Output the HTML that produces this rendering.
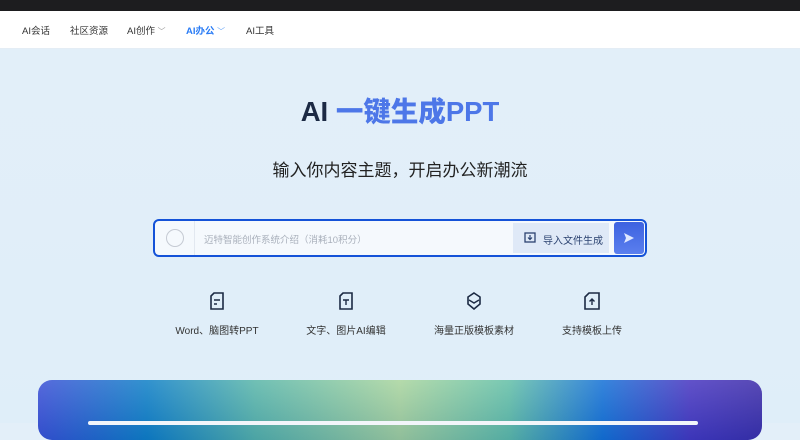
<!DOCTYPE html>
<html><head><meta charset="utf-8"><style>
*{margin:0;padding:0;box-sizing:border-box}
body{width:800px;height:423px;overflow:hidden;font-family:"Liberation Sans","Noto Sans CJK SC",sans-serif;background:linear-gradient(180deg,#e3eff9 0%,#dfeef9 100%);position:relative}
.bm{position:absolute;top:0;left:0;width:800px;height:11px;background:#1d1d1f}
.nav{position:absolute;top:11px;left:0;width:800px;height:38px;background:#fff;border-bottom:1px solid #e4edf5;font-size:9.5px;color:#333}
.nav span{position:absolute;top:12px}
.t{position:absolute;top:89px;left:0;width:800px;text-align:center;font-size:27.5px;font-weight:bold;color:#1c2a44}
.t b{color:#4d77e8}
.s{position:absolute;top:156px;left:0;width:800px;text-align:center;font-size:17px;color:#222}
.box{position:absolute;left:153px;top:219px;width:494px;height:38px;border:2.5px solid #1452d8;border-radius:6px;background:#f5f9fd;overflow:hidden}
.circ{position:absolute;left:11px;top:8px;width:18px;height:18px;border:1.5px solid #c5cad3;border-radius:50%}
.div{position:absolute;left:39px;top:0;width:1px;height:100%;background:#e2e8f0}
.ph{position:absolute;left:49px;top:11px;font-size:9.5px;color:#a9b0bb}
.imp{position:absolute;left:358px;top:2px;width:96px;height:30px;background:#dfe9f7;font-size:10px;color:#2b4270}
.imp span{position:absolute;left:30px;top:9px}
.go{position:absolute;left:459px;top:1px;width:30px;height:32px;background:linear-gradient(180deg,#3d62e0,#5b7fee);border-radius:3px}
.f{position:absolute;top:292px;width:140px;text-align:center;font-size:10px;color:#333}
.f svg{display:block;margin:0 auto 12px}
.card{position:absolute;left:38px;top:380px;width:724px;height:60px;border-radius:14px;background:linear-gradient(90deg,#3a4fd6 0%,#0e7fc6 15%,#58b5a8 30%,#a8d49c 50%,#62bfa6 65%,#1370d6 78%,#4634c0 90%,#3b2aa8 100%)}
.card:after{content:"";position:absolute;left:0;top:0;right:0;bottom:0;border-radius:14px;background:linear-gradient(180deg,rgba(255,255,255,0.15),rgba(0,60,140,0.15))}
.inner{position:absolute;left:88px;top:421px;width:610px;height:4px;background:#f2f5fa;border-radius:3px}
</style></head><body>
<div class="bm"></div>
<div class="nav">
<span style="left:22px">AI会话</span>
<span style="left:70px">社区资源</span>
<span style="left:127px">AI创作 <small style="color:#999">﹀</small></span>
<span style="left:186px;color:#2a7cf5;font-weight:bold">AI办公 <small style="color:#6aa6f5;font-weight:normal">﹀</small></span>
<span style="left:246px">AI工具</span>
</div>
<div class="t">AI <b>一键生成PPT</b></div>
<div class="s">输入你内容主题，开启办公新潮流</div>
<div class="box">
<div class="circ"></div><div class="div"></div>
<div class="ph">迈特智能创作系统介绍（消耗10积分）</div>
<div class="imp"><svg style="position:absolute;left:11px;top:8px" width="12" height="12" viewBox="0 0 12 12"><rect x="1" y="2" width="10" height="9" fill="none" stroke="#2b4270" stroke-width="1.3"/><path d="M6 4v4M4 6.5l2 2 2-2" stroke="#2b4270" stroke-width="1.2" fill="none"/></svg><span>导入文件生成</span></div>
<div class="go"><svg style="position:absolute;left:9px;top:10px" width="12" height="12" viewBox="0 0 12 12"><path d="M1 1l10 5-10 5 2-5z" fill="#dfe8ff"/></svg></div>
</div>
<div class="f" style="left:147px"><svg width="14" height="18" viewBox="0 0 14 18"><path d="M4 1h9v16H1V4z" fill="none" stroke="#1c2a44" stroke-width="1.6"/><path d="M4 8h6M4 12h3" stroke="#1c2a44" stroke-width="1.4"/></svg>Word、脑图转PPT</div>
<div class="f" style="left:276px"><svg width="14" height="18" viewBox="0 0 14 18"><path d="M4 1h9v16H1V4z" fill="none" stroke="#1c2a44" stroke-width="1.6"/><path d="M4 8h6M7 8v5" stroke="#1c2a44" stroke-width="1.4"/></svg>文字、图片AI编辑</div>
<div class="f" style="left:404px"><svg width="16" height="18" viewBox="0 0 16 18"><path d="M8 1l6 4v7l-6 5-6-5V5z" fill="none" stroke="#1c2a44" stroke-width="1.6"/><path d="M3 8l5 3 5-3" fill="none" stroke="#1c2a44" stroke-width="1.4"/></svg>海量正版模板素材</div>
<div class="f" style="left:522px"><svg width="16" height="18" viewBox="0 0 16 18"><path d="M5 1h10v16H1V5z" fill="none" stroke="#1c2a44" stroke-width="1.6"/><path d="M8 13V7M5.5 9.5L8 7l2.5 2.5" fill="none" stroke="#1c2a44" stroke-width="1.4"/></svg>支持模板上传</div>
<div class="card"></div><div class="inner"></div>
</body></html>
